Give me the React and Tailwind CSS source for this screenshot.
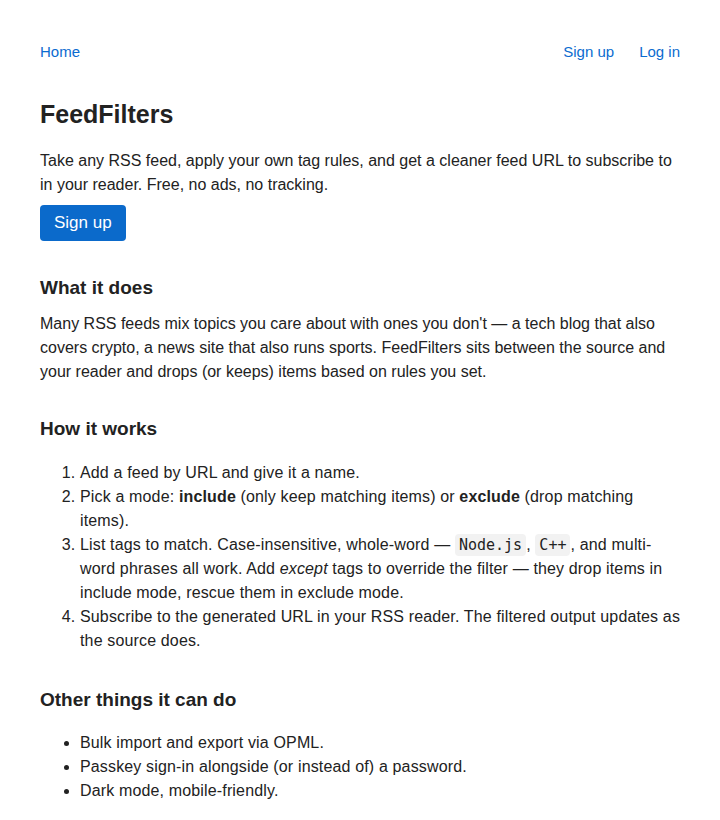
const code = 'rounded bg-[#f2f2f2] px-1 py-0.5 font-["DejaVu_Sans_Mono",monospace] text-[15px] tracking-normal'

export default function App() {
  return (
    <div className="min-h-screen bg-white font-['Liberation_Sans',sans-serif] text-[16px] leading-6 text-[#222]">
      <div className="mx-10 pt-10">
        <nav className="flex items-center justify-between text-[15px] text-[#0b6bd0]">
          <a href="#">Home</a>
          <div className="flex gap-[25px]">
            <a href="#">Sign up</a>
            <a href="#">Log in</a>
          </div>
        </nav>

        <h1 className="mt-[34px] text-[25px] font-bold leading-8">FeedFilters</h1>
        <p className="mt-[19px]">
          Take any RSS feed, apply your own tag rules, and get a cleaner feed URL to subscribe to in your
          reader. Free, no ads, no tracking.
        </p>
        <button className="mt-2 h-9 rounded bg-[#0b6acb] px-[14px] text-[17px] text-white">Sign up</button>

        <h2 className="mt-[35px] text-[19px] font-bold leading-6">What it does</h2>
        <p className="mt-3">
          Many RSS feeds mix topics you care about with ones you don't — a tech blog that also covers crypto,
          a news site that also runs sports. FeedFilters sits between the source and your reader and drops (or
          keeps) items based on rules you set.
        </p>

        <h2 className="mt-[33px] text-[19px] font-bold leading-6">How it works</h2>
        <ol className="mt-[20px] -mr-[3px] list-decimal pl-10 tracking-[0.15px]">
          <li>Add a feed by URL and give it a name.</li>
          <li>
            Pick a mode: <b>include</b> (only keep matching items) or <b>exclude</b> (drop matching items).
          </li>
          <li>
            List tags to match. Case-insensitive, whole-word — <code className={code}>Node.js</code>,{' '}
            <code className={code}>C++</code>, and multi-word phrases all work. Add <i>except</i> tags to
            override the filter — they drop items in include mode, rescue them in exclude mode.
          </li>
          <li>Subscribe to the generated URL in your RSS reader. The filtered output updates as the source does.</li>
        </ol>

        <h2 className="mt-[35px] text-[19px] font-bold leading-6">Other things it can do</h2>
        <ul className="mt-[19px] list-disc pl-10 tracking-[0.15px]">
          <li>Bulk import and export via OPML.</li>
          <li>Passkey sign-in alongside (or instead of) a password.</li>
          <li>Dark mode, mobile-friendly.</li>
        </ul>
      </div>
    </div>
  )
}
